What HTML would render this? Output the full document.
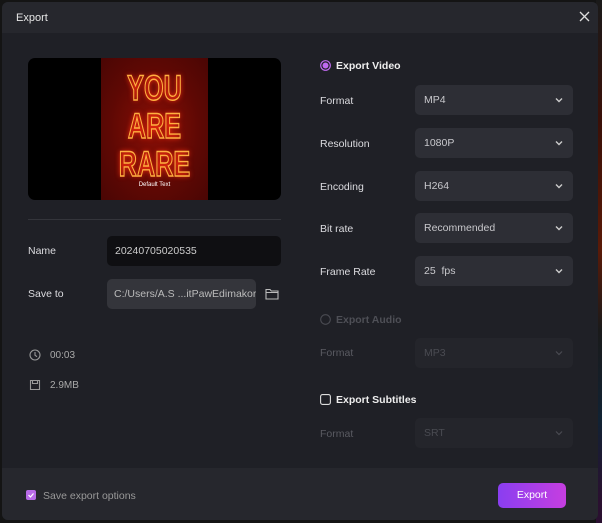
<!DOCTYPE html>
<html><head><style>
*{margin:0;padding:0;box-sizing:border-box}
body{width:602px;height:523px;background:#141414;position:relative;overflow:hidden;font-family:"Liberation Sans",sans-serif;font-size:11px;color:#d8d8dc}
.bgapp{position:absolute;left:596px;top:0;width:6px;height:523px;background:linear-gradient(#1a1a1a 0,#3a1008 120px,#5a1a08 250px,#1a1a1a 330px,#123 420px,#2a1030 500px)}
.dlg{position:absolute;left:2px;top:2px;width:596px;height:518px;background:#1f2026;border-radius:6px;overflow:hidden}
.hdr{position:absolute;left:0;top:0;width:596px;height:31px;background:#26272d;font-size:11px;color:#e6e6e6}
.hdr span{position:absolute;left:14px;top:10px}
.x{position:absolute;left:577px;top:9px}
.a{position:absolute}
.lbl{position:absolute;font-size:10.5px;color:#dcdce0}
.sel{position:absolute;left:413px;width:158px;height:30px;background:#2d2e35;border-radius:5px;color:#c8c8cc;font-size:10.5px;padding:9px 0 0 9px}
.sel svg{position:absolute;right:10px;top:12px}
.dim{background:#24252b;color:#4a4b52}
.dl{color:#5a5b62}
.ftr{position:absolute;left:0;top:466px;width:596px;height:52px;background:#26272d}
</style></head><body>
<div class="bgapp"></div>
<div class="dlg">
<div class="hdr"><span>Export</span>
<svg class="x" width="11" height="11" viewBox="0 0 11 11"><path d="M1 1L10 10M10 1L1 10" stroke="#ddd" stroke-width="1.3"/></svg></div>
<div class="a" style="left:26px;top:56px;width:253px;height:142px;background:#000;border-radius:7px;overflow:hidden">
<div class="a" style="left:73px;top:0;width:107px;height:142px;background:radial-gradient(ellipse at 50% 50%,#8a0f06 0,#5e0804 60%,#4a0604 100%)">
<div style="position:absolute;left:0;width:107px;top:12px;text-align:center;font:bold 35px/38px 'Liberation Sans',sans-serif;color:transparent;-webkit-text-stroke:1.4px #ffb040;text-shadow:0 0 6px #ff3010;transform:scaleX(0.72);transform-origin:50% 0">YOU<br>ARE<br>RARE</div>
<div style="position:absolute;left:0;width:107px;top:124px;text-align:center;font-size:6px;color:#fff">Default Text</div>
</div></div>
<div class="a" style="left:26px;top:217px;width:253px;height:1px;background:#34353b"></div>
<div class="lbl" style="left:26px;top:243px">Name</div>
<div class="a" style="left:105px;top:234px;width:174px;height:30px;background:#0f0f12;border-radius:5px;color:#ccc;font-size:10.5px;padding:9px 0 0 8px">20240705020535</div>
<div class="lbl" style="left:26px;top:286px">Save to</div>
<div class="a" style="left:105px;top:277px;width:149px;height:30px;background:#34353b;border-radius:5px;color:#bbb;font-size:10.5px;padding:9px 0 0 7px;white-space:nowrap;overflow:hidden">C:/Users/A.S ...itPawEdimakor</div>
<svg class="a" style="left:263px;top:286px" width="14" height="12" viewBox="0 0 14 12"><path d="M1 1.5h4l1.3 1.5H13v8H1z M1 4.5h12" fill="none" stroke="#bbb" stroke-width="1.1"/></svg>
<svg class="a" style="left:27px;top:347px" width="12" height="12" viewBox="0 0 12 12"><circle cx="6" cy="6" r="5" fill="none" stroke="#999" stroke-width="1.1"/><path d="M6 3v3.2l2 1.5" fill="none" stroke="#999" stroke-width="1.1"/></svg>
<div class="lbl" style="left:48px;top:348px;color:#aaa;font-size:10px">00:03</div>
<svg class="a" style="left:27px;top:377px" width="12" height="12" viewBox="0 0 12 12"><path d="M1.5 1.5h9v9h-9z M3.5 1.5v3h5v-3" fill="none" stroke="#999" stroke-width="1.1"/></svg>
<div class="lbl" style="left:48px;top:378px;color:#aaa;font-size:10px">2.9MB</div>

<svg class="a" style="left:318px;top:58px" width="11" height="11" viewBox="0 0 11 11"><circle cx="5.5" cy="5.5" r="4.8" fill="none" stroke="#c06af0" stroke-width="1.2"/><circle cx="5.5" cy="5.5" r="3" fill="#c06af0"/></svg>
<div class="lbl" style="left:334px;top:58px;font-weight:bold;color:#eee">Export Video</div>
<div class="lbl" style="left:318px;top:93px">Format</div>
<div class="sel" style="top:83px">MP4<svg width="8" height="6" viewBox="0 0 8 6"><path d="M1 1.5l3 3 3-3" fill="none" stroke="#ccc" stroke-width="1.4"/></svg></div>
<div class="lbl" style="left:318px;top:136px">Resolution</div>
<div class="sel" style="top:126px">1080P<svg width="8" height="6" viewBox="0 0 8 6"><path d="M1 1.5l3 3 3-3" fill="none" stroke="#ccc" stroke-width="1.4"/></svg></div>
<div class="lbl" style="left:318px;top:179px">Encoding</div>
<div class="sel" style="top:169px">H264<svg width="8" height="6" viewBox="0 0 8 6"><path d="M1 1.5l3 3 3-3" fill="none" stroke="#ccc" stroke-width="1.4"/></svg></div>
<div class="lbl" style="left:318px;top:221px">Bit rate</div>
<div class="sel" style="top:211px">Recommended<svg width="8" height="6" viewBox="0 0 8 6"><path d="M1 1.5l3 3 3-3" fill="none" stroke="#ccc" stroke-width="1.4"/></svg></div>
<div class="lbl" style="left:318px;top:264px">Frame Rate</div>
<div class="sel" style="top:254px">25&nbsp; fps<svg width="8" height="6" viewBox="0 0 8 6"><path d="M1 1.5l3 3 3-3" fill="none" stroke="#ccc" stroke-width="1.4"/></svg></div>

<svg class="a" style="left:318px;top:312px" width="11" height="11" viewBox="0 0 11 11"><circle cx="5.5" cy="5.5" r="4.8" fill="none" stroke="#4a4b52" stroke-width="1.1"/></svg>
<div class="lbl" style="left:334px;top:312px;font-weight:bold;color:#4e4f56">Export Audio</div>
<div class="lbl dl" style="left:318px;top:345px">Format</div>
<div class="sel dim" style="top:336px">MP3<svg width="8" height="6" viewBox="0 0 8 6"><path d="M1 1.5l3 3 3-3" fill="none" stroke="#4a4b52" stroke-width="1.2"/></svg></div>

<svg class="a" style="left:318px;top:392px" width="11" height="11" viewBox="0 0 11 11"><rect x="0.6" y="0.6" width="9.8" height="9.8" rx="2" fill="none" stroke="#ddd" stroke-width="1.1"/></svg>
<div class="lbl" style="left:334px;top:392px;font-weight:bold;color:#eee">Export Subtitles</div>
<div class="lbl dl" style="left:318px;top:426px">Format</div>
<div class="sel dim" style="top:416px">SRT<svg width="8" height="6" viewBox="0 0 8 6"><path d="M1 1.5l3 3 3-3" fill="none" stroke="#4a4b52" stroke-width="1.2"/></svg></div>

<div class="ftr">
<svg class="a" style="left:24px;top:22px" width="10" height="10" viewBox="0 0 10 10"><rect width="10" height="10" rx="2" fill="#b86ae8"/><path d="M2.5 5l2 2 3-3.5" fill="none" stroke="#fff" stroke-width="1.2"/></svg>
<div class="lbl" style="left:41px;top:22px;color:#999;font-size:10.5px">Save export options</div>
<div class="a" style="left:496px;top:15px;width:68px;height:25px;border-radius:5px;background:linear-gradient(90deg,#8a3ef0,#c63ee0);color:#fff;font-size:10.5px;text-align:center;line-height:25px">Export</div>
</div>
</div>
</body></html>
